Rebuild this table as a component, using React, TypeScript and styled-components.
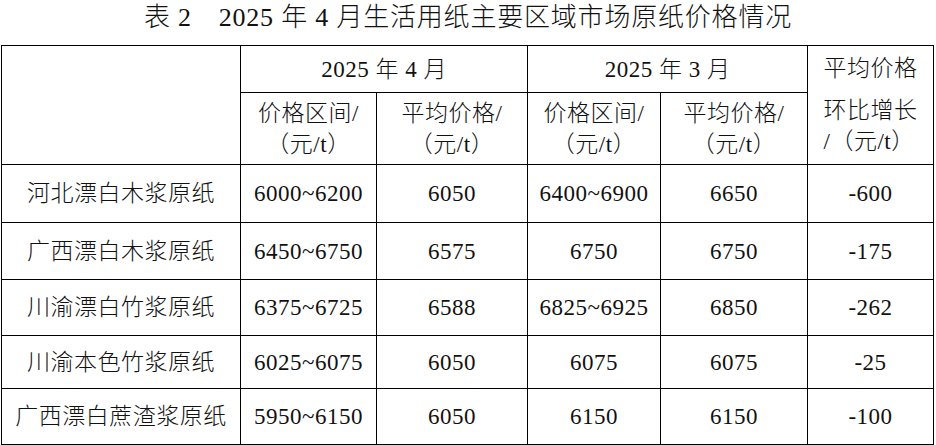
import React from "react";
import styled, { createGlobalStyle } from "styled-components";

const GlobalStyle = createGlobalStyle`
  html, body {
    margin: 0;
    padding: 0;
    background: #ffffff;
  }
  body {
    font-family: "Liberation Serif", "Noto Sans CJK SC", serif;
    font-weight: 300;
    color: #111111;
  }
`;

const Page = styled.div`
  width: 936px;
  height: 445px;
  overflow: hidden;
  display: flex;
  flex-direction: column;
  align-items: flex-start;
`;

const Title = styled.h1`
  margin: 0;
  width: 936px;
  height: 45px;
  font-size: 26px;
  font-weight: 300;
  line-height: 36px;
  letter-spacing: 0.8px;
  text-align: center;
  white-space: pre;
`;

const Table = styled.table`
  margin-left: 1px;
  border-collapse: collapse;
  table-layout: fixed;
  width: 933px;
  font-size: 23px;
  letter-spacing: 0.5px;
`;

const Row = styled.tr<{ $h: number }>`
  height: ${(p) => p.$h}px;
`;

const HeadCell = styled.th`
  border: 1px solid #000;
  padding: 0;
  font-weight: 300;
  text-align: center;
  vertical-align: middle;
  line-height: 31px;
`;

const Cell = styled.td`
  border: 1px solid #000;
  padding: 0;
  text-align: center;
  vertical-align: middle;
  line-height: 31px;
  white-space: nowrap;
`;

const Line = styled.div<{ $gap?: number }>`
  margin-bottom: ${(p) => p.$gap ?? 0}px;
  white-space: nowrap;
`;

const Stack = styled.div`
  display: inline-block;
  text-align: left;
`;

const cols = [239, 136, 151, 133, 147, 126];

const rows: { name: string; values: string[]; h: number }[] = [
  { name: "河北漂白木浆原纸", values: ["6000~6200", "6050", "6400~6900", "6650", "-600"], h: 58 },
  { name: "广西漂白木浆原纸", values: ["6450~6750", "6575", "6750", "6750", "-175"], h: 57 },
  { name: "川渝漂白竹浆原纸", values: ["6375~6725", "6588", "6825~6925", "6850", "-262"], h: 56 },
  { name: "川渝本色竹浆原纸", values: ["6025~6075", "6050", "6075", "6075", "-25"], h: 53 },
  { name: "广西漂白蔗渣浆原纸", values: ["5950~6150", "6050", "6150", "6150", "-100"], h: 56 },
];

const SubHead: React.FC<{ label: string }> = ({ label }) => (
  <HeadCell>
    <Line>{label}</Line>
    <Line>（元/t）</Line>
  </HeadCell>
);

export default function App() {
  return (
    <>
      <GlobalStyle />
      <Page>
        <Title>{"表 2\u30002025 年 4 月生活用纸主要区域市场原纸价格情况"}</Title>
        <Table>
          <colgroup>
            {cols.map((w, i) => (
              <col key={i} style={{ width: w }} />
            ))}
          </colgroup>
          <thead>
            <Row $h={47}>
              <HeadCell rowSpan={2} />
              <HeadCell colSpan={2}>2025 年 4 月</HeadCell>
              <HeadCell colSpan={2}>2025 年 3 月</HeadCell>
              <HeadCell rowSpan={2}>
                <Stack>
                  <Line $gap={11}>平均价格</Line>
                  <Line>环比增长</Line>
                  <Line>/（元/t）</Line>
                </Stack>
              </HeadCell>
            </Row>
            <Row $h={72}>
              <SubHead label="价格区间/" />
              <SubHead label="平均价格/" />
              <SubHead label="价格区间/" />
              <SubHead label="平均价格/" />
            </Row>
          </thead>
          <tbody>
            {rows.map((r) => (
              <Row key={r.name} $h={r.h}>
                <Cell>{r.name}</Cell>
                {r.values.map((v, i) => (
                  <Cell key={i}>{v}</Cell>
                ))}
              </Row>
            ))}
          </tbody>
        </Table>
      </Page>
    </>
  );
}
